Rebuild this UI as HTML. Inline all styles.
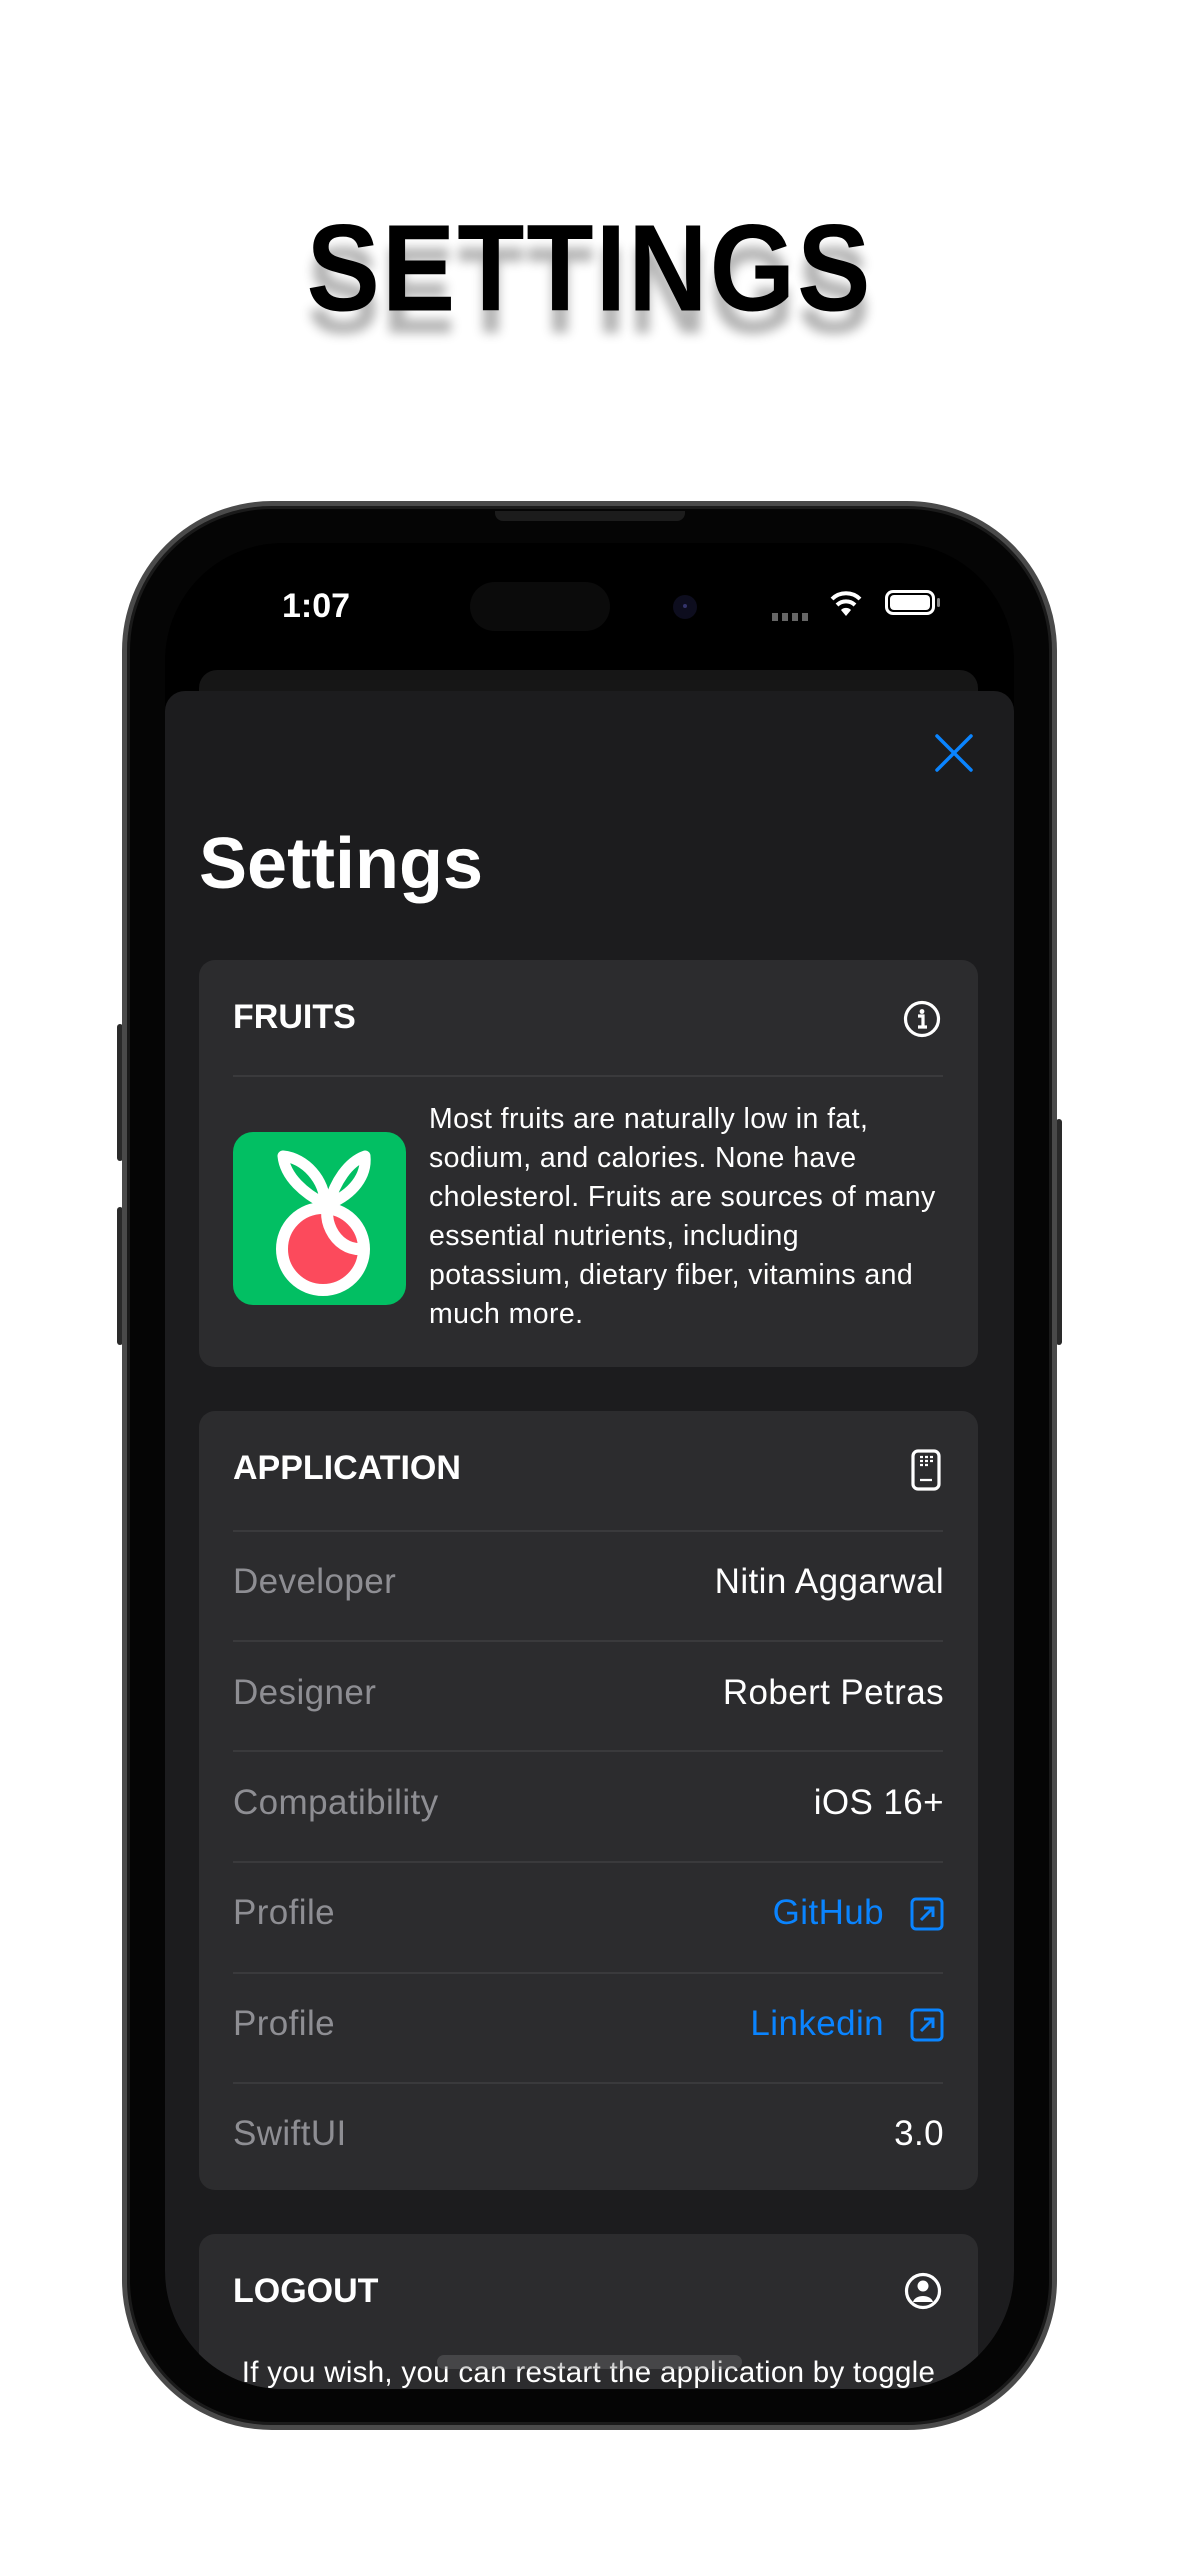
<!DOCTYPE html>
<html><head><meta charset="utf-8"><style>
*{margin:0;padding:0;box-sizing:border-box}
body{width:1179px;height:2556px;background:#fff;position:relative;overflow:hidden;font-family:"Liberation Sans",sans-serif}
.abs{position:absolute}
.title{left:0;width:1179px;top:205px;text-align:center;font-size:110px;font-weight:bold;color:#000;letter-spacing:2px;transform:scaleY(1.12);text-shadow:0 20px 10px rgba(0,0,0,.3)}
.phone{left:122px;top:501px;width:935px;height:1929px;border-radius:150px;background:#050505;border:5px solid #4a4a4a;box-shadow:inset 0 0 0 3px #1a1a1a}
.btn{background:#2a2a2a;width:6px;border-radius:3px}
.screen{left:165px;top:543px;width:849px;height:1846px;border-radius:118px;background:#000;overflow:hidden}
.card{background:#2c2c2e;border-radius:16px;left:34px;width:779px}
.hdr{font-size:34px;font-weight:bold;color:#fff;left:34px}
.div{left:34px;width:710px;height:2px;background:#3a3a3c}
.lbl{left:34px;font-size:35px;letter-spacing:0.4px;color:#8e8e93}
.val{right:34px;font-size:35px;letter-spacing:0.4px;color:#fff;text-align:right}
.blue{color:#0a84ff}
</style></head><body>
<div class="abs title">SETTINGS</div>
<div class="abs btn" style="left:117px;top:1024px;height:137px"></div>
<div class="abs btn" style="left:117px;top:1207px;height:138px"></div>
<div class="abs btn" style="left:1056px;top:1119px;height:226px"></div>
<div class="abs phone"></div>
<div class="abs" style="left:495px;top:511px;width:190px;height:10px;background:#1c1c1c;border-radius:0 0 8px 8px"></div>
<div class="abs screen">
  <div class="abs" style="left:117px;top:44px;font-size:34px;color:#fff;font-weight:bold;width:100px">1:07</div>
  <div class="abs" style="left:305px;top:39px;width:140px;height:49px;border-radius:25px;background:#0b0b0b"></div>
  <div class="abs" style="left:508px;top:52px;width:24px;height:24px;border-radius:50%;background:#0d0d1e"></div>
  <div class="abs" style="top:61px;width:4px;height:4px;border-radius:50%;background:#33336a;left:518px"></div>
  <div class="abs" style="left:607px;top:70px;width:38px;height:8px;background:repeating-linear-gradient(90deg,#666 0 6px,transparent 6px 10px)"></div>
  <svg class="abs" style="left:665px;top:45px" width="32" height="30" viewBox="0 0 32 30"><path d="M2 11 A20 20 0 0 1 30 11" stroke="#fff" stroke-width="4" fill="none"/><path d="M7 17 A13 13 0 0 1 25 17" stroke="#fff" stroke-width="4" fill="none"/><path d="M11 22 L16 28 L21 22 A7 7 0 0 0 11 22Z" fill="#fff"/></svg>
  <div class="abs" style="left:720px;top:47px;width:50px;height:25px;border:3px solid #fff;border-radius:8px;padding:2px"><div style="width:100%;height:100%;background:#fff;border-radius:4px"></div></div>
  <div class="abs" style="left:772px;top:55px;width:3px;height:9px;background:#888;border-radius:2px"></div>
  <div class="abs" style="left:34px;top:127px;width:779px;height:100px;background:#161616;border-radius:18px"></div>
  <div class="abs" style="left:0;top:148px;width:849px;height:1800px;background:#1c1c1e;border-radius:20px 20px 0 0">
    <svg class="abs" style="left:769px;top:42px" width="40" height="40" viewBox="0 0 40 40"><path d="M3 3L37 37M37 3L3 37" stroke="#0a84ff" stroke-width="3.5" stroke-linecap="round"/></svg>
    <div class="abs" style="left:34px;top:132px;font-size:72px;font-weight:bold;color:#fff">Settings</div>
    <div class="abs card" style="top:269px;height:407px">
      <div class="abs hdr" style="top:38px">FRUITS</div>
      <svg class="abs" style="left:704px;top:40px" width="38" height="38" viewBox="0 0 38 38"><circle cx="19" cy="19" r="16.5" stroke="#fff" stroke-width="3.2" fill="none"/><circle cx="19" cy="11.5" r="2.4" fill="#fff"/><path d="M15 16h5v11M15 27h9" stroke="#fff" stroke-width="3.2" fill="none"/></svg>
      <div class="abs div" style="top:115px"></div>
      <div class="abs" style="left:34px;top:172px;width:173px;height:173px;background:#02bf63;border-radius:20px">
        <svg width="173" height="173" viewBox="0 0 173 173"><circle cx="90" cy="117" r="41" fill="#fc4a5c" stroke="#fff" stroke-width="12"/><path d="M100 66 C 85 80, 100 120, 130 117" stroke="#fff" stroke-width="12" fill="none"/><path d="M92 72 C 72 62, 52 45, 50 24 C 72 26, 92 48, 92 72Z" stroke="#fff" stroke-width="11" fill="#02bf63" stroke-linejoin="round"/><path d="M96 72 C 102 50, 115 30, 132 24 C 134 44, 120 62, 96 72Z" stroke="#fff" stroke-width="11" fill="#02bf63" stroke-linejoin="round"/></svg>
      </div>
      <div class="abs" style="left:230px;top:140px;font-size:28.5px;letter-spacing:0.4px;line-height:39px;color:#fff;white-space:nowrap">Most fruits are naturally low in fat,<br>sodium, and calories. None have<br>cholesterol. Fruits are sources of many<br>essential nutrients, including<br>potassium, dietary fiber, vitamins and<br>much more.</div>
    </div>
    <div class="abs card" style="top:720px;height:779px">
      <div class="abs hdr" style="top:38px">APPLICATION</div>
      <svg class="abs" style="left:712px;top:38px" width="30" height="42" viewBox="0 0 30 42"><rect x="2" y="2" width="26" height="38" rx="5" stroke="#fff" stroke-width="3.2" fill="none"/><path d="M9 8h3M14 8h3M19 8h3M9 12h3M14 12h3M19 12h3M9 16h3M14 16h3M9 31h12" stroke="#fff" stroke-width="2.2"/></svg>
      <div class="abs div" style="top:119px"></div>
      <div class="abs lbl" style="top:151px">Developer</div><div class="abs val" style="top:151px">Nitin Aggarwal</div>
      <div class="abs div" style="top:229px"></div>
      <div class="abs lbl" style="top:262px">Designer</div><div class="abs val" style="top:262px">Robert Petras</div>
      <div class="abs div" style="top:339px"></div>
      <div class="abs lbl" style="top:372px">Compatibility</div><div class="abs val" style="top:372px">iOS 16+</div>
      <div class="abs div" style="top:450px"></div>
      <div class="abs lbl" style="top:482px">Profile</div><div class="abs val blue" style="top:482px;right:94px">GitHub</div>
      <svg class="abs" style="left:711px;top:486px" width="34" height="34" viewBox="0 0 34 34"><rect x="2" y="2" width="30" height="30" rx="4" stroke="#0a84ff" stroke-width="3" fill="none"/><path d="M11 23L23 11M14 11h9v9" stroke="#0a84ff" stroke-width="3" fill="none"/></svg>
      <div class="abs div" style="top:561px"></div>
      <div class="abs lbl" style="top:593px">Profile</div><div class="abs val blue" style="top:593px;right:94px">Linkedin</div>
      <svg class="abs" style="left:711px;top:597px" width="34" height="34" viewBox="0 0 34 34"><rect x="2" y="2" width="30" height="30" rx="4" stroke="#0a84ff" stroke-width="3" fill="none"/><path d="M11 23L23 11M14 11h9v9" stroke="#0a84ff" stroke-width="3" fill="none"/></svg>
      <div class="abs div" style="top:671px"></div>
      <div class="abs lbl" style="top:703px">SwiftUI</div><div class="abs val" style="top:703px">3.0</div>
    </div>
    <div class="abs card" style="top:1543px;height:400px">
      <div class="abs hdr" style="top:38px">LOGOUT</div>
      <svg class="abs" style="left:705px;top:38px" width="38" height="38" viewBox="0 0 38 38"><circle cx="19" cy="19" r="16.5" stroke="#fff" stroke-width="3.2" fill="none"/><circle cx="19" cy="14" r="5.5" fill="#fff"/><path d="M9 30 C11 22, 27 22, 29 30Z" fill="#fff"/></svg>
      <div class="abs" style="left:0;width:779px;top:122px;text-align:center;font-size:29.5px;letter-spacing:0.3px;color:#fff;white-space:nowrap">If you wish, you can restart the application by toggle</div>
    </div>
  </div>
  <div class="abs" style="left:272px;top:1812px;width:305px;height:14px;border-radius:7px;background:rgba(120,120,120,.35)"></div>
</div>
</body></html>
